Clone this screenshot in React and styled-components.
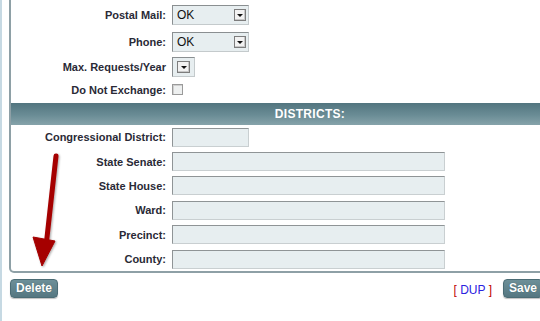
import React from "react";
import styled, { createGlobalStyle } from "styled-components";


//  Page reset
const GlobalStyle = createGlobalStyle`
  html, body {
    margin: 0;
    padding: 0;
    background: #ffffff;
    overflow: hidden;
    font-family: "Liberation Sans", Arial, sans-serif;
  }
`;


//  Styles
const Page = styled.div`
  position: relative;
  width: 620px;
  min-height: 321px;
  border-left: 2px solid #c6d9e3;
  padding-left: 7px;
  box-sizing: border-box;
`;

const Panel = styled.div`
  width: 602px;
  border: 2px solid #8ea0a6;
  border-top: none;
  border-radius: 0 0 5px 5px;
  padding-top: 2px;
  box-sizing: border-box;
`;

const Row = styled.div`
  display: grid;
  grid-template-columns: 155px 1fr;
  column-gap: 6px;
  align-items: center;
  height: ${(p) => p.h}px;
`;

const Label = styled.div`
  text-align: right;
  font-size: 11px;
  font-weight: bold;
  color: #2a2a36;
  white-space: nowrap;
`;

const Header = styled.div`
  height: 22px;
  margin-top: 2px;
  display: flex;
  align-items: center;
  justify-content: center;
  background: linear-gradient(to bottom, #52757f 0%, #6a8c95 55%, #86a3aa 100%);
  color: #ffffff;
  font-size: 12px;
  font-weight: bold;
  letter-spacing: 0.3px;
`;

const Input = styled.div`
  width: ${(p) => p.w}px;
  height: 19px;
  box-sizing: border-box;
  background: #e7eef0;
  border: 1px solid #c9cfd1;
  border-top-color: #8f9496;
  border-left-color: #8f9496;
`;

const Select = styled.div`
  width: ${(p) => p.w}px;
  height: 20px;
  box-sizing: border-box;
  display: flex;
  align-items: center;
  justify-content: space-between;
  padding: 0 2px 0 4px;
  background: #e7eef0;
  border: 1px solid #c4cacc;
  border-top-color: #8a8f91;
  border-left-color: #8a8f91;
  font-size: 12px;
  color: #111;
`;

const DropButton = styled.span`
  width: ${(p) => p.w || 12}px;
  height: 12px;
  box-sizing: border-box;
  display: flex;
  align-items: center;
  justify-content: center;
  background: #f2f2f2;
  border: 1px solid #7d7d7d;
  box-shadow: inset -1px -1px 0 #c8c8c8;

  &::after {
    content: "";
    border-left: 3px solid transparent;
    border-right: 3px solid transparent;
    border-top: 3px solid #111;
  }
`;

const Checkbox = styled.span`
  display: block;
  width: 11px;
  height: 11px;
  box-sizing: border-box;
  border: 1px solid #9a9a9a;
  background: #eef0f0;
  box-shadow: inset 1px 1px 0 #d0d0d0;
`;

const Footer = styled.div`
  display: flex;
  align-items: center;
  justify-content: space-between;
  width: 602px;
  margin-top: 6px;
  padding-left: 1px;
  box-sizing: border-box;
`;

const Actions = styled.div`
  display: flex;
  align-items: center;
  gap: 11px;
  margin-right: 68px;
`;

const Button = styled.button`
  height: 19px;
  padding: 0 5px;
  border: 1px solid #4b6c75;
  border-radius: 4px;
  background: linear-gradient(to bottom, #6d8f98 0%, #557781 100%);
  color: #ffffff;
  font-family: "Liberation Sans", Arial, sans-serif;
  font-size: 12px;
  font-weight: bold;
  line-height: 17px;
  text-shadow: 0 0 1px #3d5a62;
  box-shadow: 0 1px 1px rgba(0, 0, 0, 0.25);
`;

const DupLink = styled.span`
  font-size: 12px;
  color: #c00000;
  padding-top: 2px;

  a {
    color: #2a22e0;
    text-decoration: none;
  }
`;

const Arrow = styled.svg`
  position: absolute;
  left: 0;
  top: 0;
  pointer-events: none;
`;


const topRows = [
    { label: "Postal Mail:", h: 26, ctl: "ok" },
    { label: "Phone:", h: 28, ctl: "ok" },
    { label: "Max. Requests/Year", h: 22, ctl: "small" },
    { label: "Do Not Exchange:", h: 23, ctl: "check" }
];

const districtRows = [
    { label: "Congressional District:", w: 77 },
    { label: "State Senate:", w: 273 },
    { label: "State House:", w: 273 },
    { label: "Ward:", w: 273 },
    { label: "Precinct:", w: 273 },
    { label: "County:", w: 273 }
];


export default function App()
{
    //  Render one control of the upper block
    const control = (ctl) =>
    {
        if (ctl === "ok")
        {
            return (
                <Select w={77}>
                    OK
                    <DropButton />
                </Select>
            );
        }
        if (ctl === "small")
        {
            return (
                <Select w={23}>
                    <DropButton w={13} />
                </Select>
            );
        }
        return <Checkbox />;
    };

    return (
        <>
            <GlobalStyle />
            <Page>
                <Panel>
                    {topRows.map((row) => (
                        <Row key={row.label} h={row.h}>
                            <Label>{row.label}</Label>
                            <div>{control(row.ctl)}</div>
                        </Row>
                    ))}

                    <Header>DISTRICTS:</Header>

                    {districtRows.map((row) => (
                        <Row key={row.label} h={24.4}>
                            <Label>{row.label}</Label>
                            <Input w={row.w} />
                        </Row>
                    ))}
                </Panel>

                <Footer>
                    <Button>Delete</Button>
                    <Actions>
                        <DupLink>[ <a href="#dup">DUP</a> ]</DupLink>
                        <Button>Save</Button>
                    </Actions>
                </Footer>

                {/*  Annotation arrow  */}
                <Arrow width="80" height="290" viewBox="0 0 80 290">
                    <defs>
                        <filter id="shadow" x="-50%" y="-20%" width="200%" height="140%">
                            <feDropShadow dx="1" dy="1" stdDeviation="1.2" floodColor="#000" floodOpacity="0.35" />
                        </filter>
                    </defs>
                    <g filter="url(#shadow)" fill="#a50000" stroke="#a50000">
                        <line x1="54" y1="156" x2="44.5" y2="242" strokeWidth="5" strokeLinecap="round" />
                        <polygon points="31,237 53,241 40,266" strokeWidth="1" strokeLinejoin="round" />
                    </g>
                </Arrow>
            </Page>
        </>
    );
}
